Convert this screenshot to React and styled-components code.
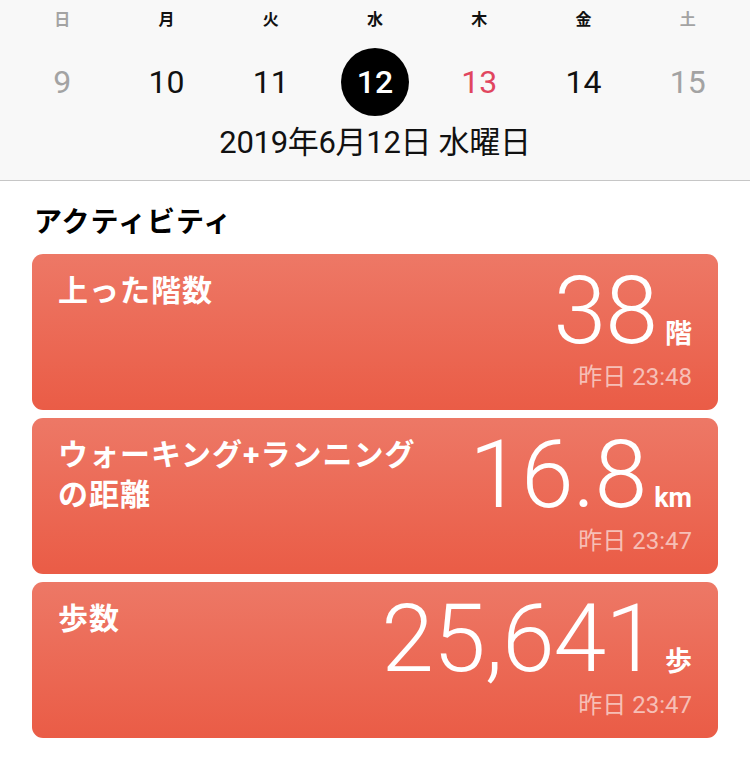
import { createGlobalStyle, styled } from "styled-components"

const GlobalStyle = createGlobalStyle`
    html, body {
        margin: 0;
        padding: 0;
        background-color: white;
    }

    body {
        font-family: Roboto, "Noto Sans CJK JP", sans-serif;
        -webkit-font-smoothing: antialiased;
    }
`;

const Page = styled.div`
    width: 750px;
    height: 767px;
    overflow: hidden;
    background-color: white;
`;

const Header = styled.div`
    background-color: #f8f8f8;
    border-bottom: 1px solid #c6c6c6;
    padding: 0px 10px;
    height: 181px;
    box-sizing: border-box;
`;

const Week = styled.div`
    display: grid;
    grid-template-columns: repeat(7, 1fr);
    align-items: center;
    justify-items: center;
`;

const DayName = styled.div`
    height: 40px;
    line-height: 40px;
    font-size: 16px;
    font-weight: 700;
    color: ${(props) => (props.$muted ? "#a3a3a3" : "#111")};
`;

const Day = styled.div`
    width: 68px;
    height: 68px;
    margin-top: 8px;
    border-radius: 50%;
    display: flex;
    align-items: center;
    justify-content: center;
    font-size: 32px;
    font-weight: ${(props) => (props.$selected ? 500 : 400)};
    background-color: ${(props) => (props.$selected ? "black" : "transparent")};
    color: ${(props) => props.$color};
`;

const DateLabel = styled.div`
    text-align: center;
    font-size: 31px;
    line-height: 40px;
    margin-top: 7px;
    color: #111;
    letter-spacing: -0.3px;
`;

const Section = styled.div`
    padding: 0px 32px;
`;

const SectionTitle = styled.h2`
    margin: 0;
    padding: 22px 2px 0px;
    height: 73px;
    box-sizing: border-box;
    font-size: 28px;
    line-height: 40px;
    font-weight: 700;
    letter-spacing: 1px;
    color: black;
`;

const Cards = styled.div`
    display: flex;
    flex-direction: column;
    gap: 8px;
`;

const Card = styled.div`
    height: 156px;
    box-sizing: border-box;
    border-radius: 11px;
    background: linear-gradient(180deg, #ed7866 0%, #ea5c46 100%);
    padding: 17px 26px 0px;
    display: flex;
    justify-content: space-between;
    color: white;
`;

const Title = styled.div`
    font-size: 30px;
    font-weight: 700;
    line-height: 40px;
    letter-spacing: 1px;
`;

const Figures = styled.div`
    display: flex;
    flex-direction: column;
    align-items: flex-end;
`;

const Reading = styled.div`
    display: flex;
    align-items: baseline;
    gap: 8px;
    margin-top: -2px;
`;

const Value = styled.span`
    font-size: 95px;
    font-weight: 300;
    line-height: 84px;
    letter-spacing: -1px;
`;

const Unit = styled.span`
    font-size: 27px;
    font-weight: 700;
    line-height: 32px;
`;

const Time = styled.div`
    font-size: 24px;
    line-height: 30px;
    margin-top: 9px;
    color: rgba(255, 255, 255, 0.6);
`;

const days = [
    { name: "日", date: "9", muted: true, color: "#a3a3a3" },
    { name: "月", date: "10", color: "#111" },
    { name: "火", date: "11", color: "#111" },
    { name: "水", date: "12", color: "white", selected: true },
    { name: "木", date: "13", color: "#e1465f" },
    { name: "金", date: "14", color: "#111" },
    { name: "土", date: "15", muted: true, color: "#a3a3a3" },
];

const activities = [
    { title: ["上った階数"], value: "38", unit: "階", time: "昨日 23:48" },
    { title: ["ウォーキング+ランニング", "の距離"], value: "16.8", unit: "km", time: "昨日 23:47" },
    { title: ["歩数"], value: "25,641", unit: "歩", time: "昨日 23:47" },
];

const App = () => {
    return (
        <Page>
            <GlobalStyle />
            <Header>
                <Week>
                    {days.map((d) => (
                        <DayName key={d.name} $muted={d.muted}>{d.name}</DayName>
                    ))}
                    {days.map((d) => (
                        <Day key={d.date} $selected={d.selected} $color={d.color}>{d.date}</Day>
                    ))}
                </Week>
                <DateLabel>2019年6月12日 水曜日</DateLabel>
            </Header>
            <Section>
                <SectionTitle>アクティビティ</SectionTitle>
                <Cards>
                    {activities.map((a) => (
                        <Card key={a.value}>
                            <Title>
                                {a.title.map((line) => (
                                    <div key={line}>{line}</div>
                                ))}
                            </Title>
                            <Figures>
                                <Reading>
                                    <Value>{a.value}</Value>
                                    <Unit>{a.unit}</Unit>
                                </Reading>
                                <Time>{a.time}</Time>
                            </Figures>
                        </Card>
                    ))}
                </Cards>
            </Section>
        </Page>
    )
}

export default App;
